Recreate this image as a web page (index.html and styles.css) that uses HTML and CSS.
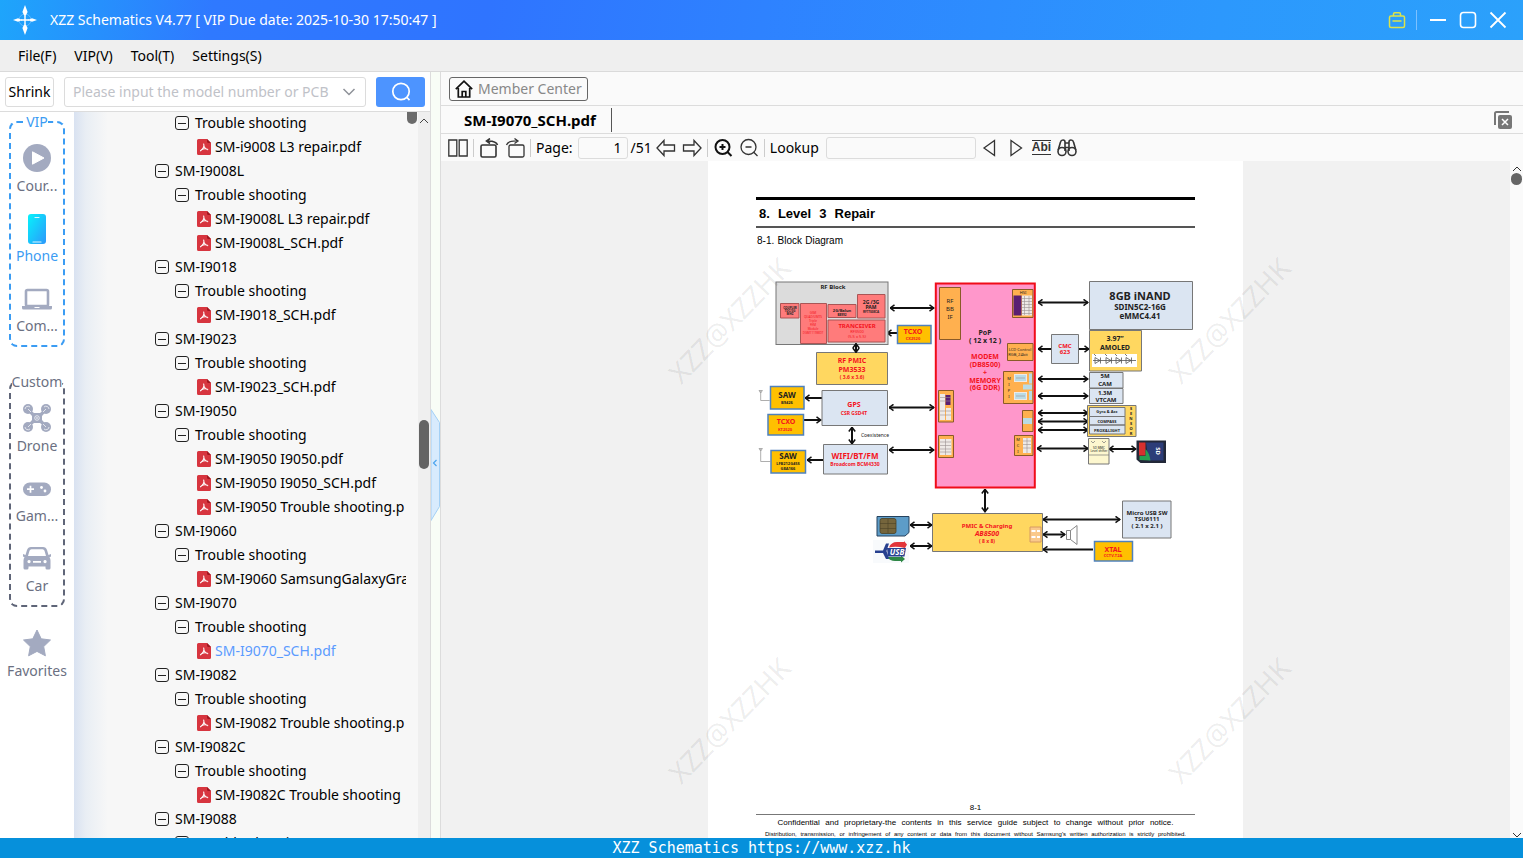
FILE: index.html
```html
<!DOCTYPE html>
<html lang="en">
<head>
<meta charset="utf-8">
<title>XZZ Schematics</title>
<link rel="stylesheet" href="styles.css">
</head>
<body>
<svg class="sprite" aria-hidden="true">
  <symbol id="pdf" viewBox="0 0 14 16">
    <path fill="#d7353f" d="M1.500 0H10l4 4v10.500a1.500 1.500 0 0 1-1.500 1.500h-11A1.500 1.500 0 0 1 0 14.500v-13A1.500 1.500 0 0 1 1.500 0z"/>
    <path fill="#a11720" d="M10 0l4 4h-2.500A1.500 1.500 0 0 1 10 2.500z"/>
    <path fill="none" stroke="#fff" stroke-width="1.100" stroke-linecap="round" d="M6.700 5c1 2.500-1 5.500-3.200 6.800M7 7.500c.8 2 2.200 3 3.800 3.200M4.500 10.800c1.500-1 3.500-1.400 5.500-.8"/>
  </symbol>
</svg>
<div class="app">
  <header class="titlebar">
    <svg class="logo" viewBox="0 0 24 30" aria-hidden="true">
      <circle cx="12" cy="15" r="6" fill="none" stroke="#a9d8ff" stroke-width="1" opacity=".45"/>
      <path fill="#fff" d="M12 0l2.600 7L12 12 9.400 7zM12 30l2.600-7-2.600-5L9.400 23zM0 15l5-1.800 4.500 1.800L5 16.800zM24 15l-5-1.800-4.500 1.800 4.500 1.800z"/>
      <path stroke="#fff" stroke-width="1.400" d="M12 11v8M8 15h8"/>
    </svg>
    <span class="title">XZZ Schematics V4.77 [ VIP Due date: 2025-10-30 17:50:47 ]</span>
    <button class="win" aria-label="Toolbox"><svg width="18" height="18" viewBox="0 0 18 18" fill="none" stroke="#dce34a" stroke-width="1.500"><rect x="1.500" y="5" width="15" height="11.500" rx="1.500"/><path d="M5.500 5V3a1.200 1.200 0 0 1 1.200-1.200h4.600A1.200 1.200 0 0 1 12.500 3v2M4.500 10h9"/></svg></button>
    <span class="win-sep"></span>
    <button class="win" aria-label="Minimize"><svg width="18" height="18" viewBox="0 0 18 18"><path stroke="#fff" stroke-width="2" d="M1 9h16"/></svg></button>
    <button class="win" aria-label="Maximize"><svg width="18" height="18" viewBox="0 0 18 18"><rect x="1.500" y="1.500" width="15" height="15" rx="3" fill="none" stroke="#fff" stroke-width="1.600"/></svg></button>
    <button class="win" aria-label="Close"><svg width="18" height="18" viewBox="0 0 18 18"><path stroke="#fff" stroke-width="1.800" d="M1.500 1.500l15 15M16.500 1.500l-15 15"/></svg></button>
  </header>
  <nav class="menubar">
    <button>File(F)</button><button>VIP(V)</button><button>Tool(T)</button><button>Settings(S)</button>
  </nav>
  <main class="main">
    <section class="left">
      <form class="search">
        <button type="button" class="shrink">Shrink</button>
        <div class="combo">
          <input type="text" aria-label="Model search" placeholder="Please input the model number or PCB">
          <button type="button" aria-label="History"><svg width="14" height="8" viewBox="0 0 14 8"><path d="M1.500 1l5.500 5.500L12.500 1" fill="none" stroke="#8f9299" stroke-width="1.500"/></svg></button>
        </div>
        <button type="button" class="go" aria-label="Search"><svg width="20" height="20" viewBox="0 0 20 20" fill="none" stroke="#fff" stroke-width="1.700"><circle cx="10" cy="9.500" r="8.200"/><path d="M15.500 15l3 3.200"/></svg></button>
      </form>
      <div class="browse">
        <aside class="rail">
          <fieldset class="group vip">
            <legend>VIP</legend>
            <button class="cat"><svg viewBox="0 0 30 28"><circle cx="15" cy="14" r="14" fill="#a3aac0"/><path d="M10.500 7.800v12.400L22 14z" fill="#fff" stroke="#fff" stroke-linejoin="round"/></svg><span>Cour...</span></button>
            <button class="cat on"><svg viewBox="0 0 30 28"><defs><linearGradient id="ph" x1="0" x2="1" y1="0" y2="1"><stop offset="0" stop-color="#06f3fb"/><stop offset="1" stop-color="#2d97fb"/></linearGradient></defs><rect x="6" y="0" width="18" height="30" rx="3" fill="url(#ph)"/><path d="M13 3.500h4M11 28h8" stroke="#d9f6ff" stroke-width="1.200" stroke-linecap="round"/></svg><span>Phone</span></button>
            <button class="cat"><svg viewBox="0 0 30 28"><rect x="4" y="6" width="22" height="16" rx="1.500" fill="none" stroke="#a3aac0" stroke-width="2.600"/><path d="M0 22h30v2q0 1.500-1.500 1.500h-27Q0 25.500 0 24z" fill="#a3aac0"/><path d="M12.500 23.500h5" stroke="#fff"/></svg><span>Com...</span></button>
          </fieldset>
          <fieldset class="group custom">
            <legend>Custom</legend>
            <button class="cat"><svg viewBox="0 0 30 28"><g fill="#a3aac0"><circle cx="6" cy="5" r="5"/><circle cx="24" cy="5" r="5"/><circle cx="6" cy="23" r="5"/><circle cx="24" cy="23" r="5"/><path d="M6 4l6 5h6l6-5 1.500 2-5.500 6v4l5.500 6-1.500 2-6-5h-6l-6 5-1.500-2 5.500-6v-4L4.500 6z"/></g><g fill="none" stroke="#fff" stroke-width=".7"><circle cx="15" cy="14" r="2.300"/><path d="M3 5a3 3 0 0 1 5-2M22 3a3 3 0 0 1 5 2M3 23a3 3 0 0 0 5 2M22 25a3 3 0 0 0 5-2M6 5l3 3M24 5l-3 3M6 23l3-3M24 23l-3-3"/></g><circle cx="15" cy="14" r=".8" fill="#fff"/></svg><span>Drone</span></button>
            <button class="cat"><svg viewBox="0 0 30 28"><rect x="1" y="8.500" width="28" height="13.500" rx="6.700" fill="#a3aac0"/><path d="M5 15.200h7M8.500 11.700v7" stroke="#fff" stroke-width="1.700"/><circle cx="19.500" cy="13.500" r="1.400" fill="#fff"/><circle cx="23" cy="17" r="1.400" fill="#fff"/></svg><span>Gam...</span></button>
            <button class="cat"><svg viewBox="0 0 30 28"><path fill="#a3aac0" fill-rule="evenodd" d="M9 3h12q3 0 4 3l1.500 5 2.500-1v2.500l-1.500.8q1 1.200 1 3.200V24q0 1.500-1.500 1.500h-2Q23.500 25.500 23.500 24v-1.500h-17V24Q6.500 25.500 5 25.500H3Q1.500 25.500 1.500 24v-7.500q0-2 1-3.200L1 12.500V10l2.500 1L5 6q1-3 4-3zm.5 2.200Q8 5.200 7.500 6.800L6 12h18l-1.500-5.200Q22 5.200 20.500 5.200zM7 16a1.600 1.600 0 1 0 .1 0zm16 0a1.600 1.600 0 1 0 .1 0zM11 17v1.800h8V17z"/></svg><span>Car</span></button>
          </fieldset>
          <button class="cat fav"><svg viewBox="0 0 30 28"><path d="M15 1l4.200 8.800 9.300 1.200-6.800 6.600 1.700 9.200L15 22.400l-8.400 4.400 1.700-9.200L1.500 11l9.300-1.200z" fill="#a3aac0" stroke="#a3aac0" stroke-linejoin="round"/></svg><span>Favorites</span></button>
        </aside>
        <div class="tree-pane">
          <ul class="tree">
            <li><ul><li><div class="row"><button class="tog" aria-label="Collapse"></button>Trouble shooting</div>
              <a class="row file" href="#"><svg><use href="#pdf"/></svg>SM-i9008 L3 repair.pdf</a></li></ul></li>
            <li><div class="row"><button class="tog" aria-label="Collapse"></button>SM-I9008L</div>
              <ul><li><div class="row"><button class="tog" aria-label="Collapse"></button>Trouble shooting</div>
              <a class="row file" href="#"><svg><use href="#pdf"/></svg>SM-I9008L L3 repair.pdf</a>
              <a class="row file" href="#"><svg><use href="#pdf"/></svg>SM-I9008L_SCH.pdf</a></li></ul></li>
            <li><div class="row"><button class="tog" aria-label="Collapse"></button>SM-I9018</div>
              <ul><li><div class="row"><button class="tog" aria-label="Collapse"></button>Trouble shooting</div>
              <a class="row file" href="#"><svg><use href="#pdf"/></svg>SM-I9018_SCH.pdf</a></li></ul></li>
            <li><div class="row"><button class="tog" aria-label="Collapse"></button>SM-I9023</div>
              <ul><li><div class="row"><button class="tog" aria-label="Collapse"></button>Trouble shooting</div>
              <a class="row file" href="#"><svg><use href="#pdf"/></svg>SM-I9023_SCH.pdf</a></li></ul></li>
            <li><div class="row"><button class="tog" aria-label="Collapse"></button>SM-I9050</div>
              <ul><li><div class="row"><button class="tog" aria-label="Collapse"></button>Trouble shooting</div>
              <a class="row file" href="#"><svg><use href="#pdf"/></svg>SM-I9050 I9050.pdf</a>
              <a class="row file" href="#"><svg><use href="#pdf"/></svg>SM-I9050 I9050_SCH.pdf</a>
              <a class="row file" href="#"><svg><use href="#pdf"/></svg>SM-I9050 Trouble shooting.p</a></li></ul></li>
            <li><div class="row"><button class="tog" aria-label="Collapse"></button>SM-I9060</div>
              <ul><li><div class="row"><button class="tog" aria-label="Collapse"></button>Trouble shooting</div>
              <a class="row file" href="#"><svg><use href="#pdf"/></svg>SM-I9060 SamsungGalaxyGra</a></li></ul></li>
            <li><div class="row"><button class="tog" aria-label="Collapse"></button>SM-I9070</div>
              <ul><li><div class="row"><button class="tog" aria-label="Collapse"></button>Trouble shooting</div>
              <a class="row file current" href="#"><svg><use href="#pdf"/></svg>SM-I9070_SCH.pdf</a></li></ul></li>
            <li><div class="row"><button class="tog" aria-label="Collapse"></button>SM-I9082</div>
              <ul><li><div class="row"><button class="tog" aria-label="Collapse"></button>Trouble shooting</div>
              <a class="row file" href="#"><svg><use href="#pdf"/></svg>SM-I9082 Trouble shooting.p</a></li></ul></li>
            <li><div class="row"><button class="tog" aria-label="Collapse"></button>SM-I9082C</div>
              <ul><li><div class="row"><button class="tog" aria-label="Collapse"></button>Trouble shooting</div>
              <a class="row file" href="#"><svg><use href="#pdf"/></svg>SM-I9082C Trouble shooting</a></li></ul></li>
            <li><div class="row"><button class="tog" aria-label="Collapse"></button>SM-I9088</div>
              <ul><li><div class="row"><button class="tog" aria-label="Collapse"></button>Trouble shooting</div></li></ul></li>
          </ul>
          <div class="old-thumb"></div>
          <div class="vscroll"><svg width="10" height="6" viewBox="0 0 10 6"><path d="M1 5l4-4 4 4" fill="none" stroke="#444"/></svg><div class="thumb"></div></div>
        </div>
      </div>
    </section>
    <div class="splitter"><button aria-label="Hide panel"><svg width="9" height="112" viewBox="0 0 9 112"><path d="M0 .5l8.500 13v84L0 111.500z" fill="#d8ebfd" stroke="#a3d0f5"/><path d="M5.500 51L2.500 54l3 3" fill="none" stroke="#4ba4ee" stroke-width="1.200"/></svg></button></div>
    <section class="right">
      <div class="memberbar">
        <button class="member"><svg width="18" height="18" viewBox="0 0 18 18" fill="none" stroke="#111" stroke-width="1.700"><path d="M.8 9.200L9 1.200l8.200 8M3.300 8v9h11.400V8M7.200 17v-5.500h3.600V17"/></svg>Member Center</button>
      </div>
      <div class="tabs">
        <button class="tab">SM-I9070_SCH.pdf</button>
        <button class="closeall" aria-label="Close all"><svg width="18" height="18" viewBox="0 0 18 18"><path d="M1 14V2.500Q1 1 2.500 1H15" fill="none" stroke="#777" stroke-width="2"/><rect x="4" y="4" width="14" height="14" rx="2" fill="#777"/><path d="M8 8l6 6M14 8l-6 6" stroke="#fff" stroke-width="1.500"/></svg></button>
      </div>
      <div class="toolbar">
        <button aria-label="Two pages"><svg class="g" viewBox="0 0 20 20"><path d="M.8 2h8v16h-8zM11.200 2h8v16h-8z"/></svg></button>
        <i></i>
        <button aria-label="Rotate left"><svg class="g b" viewBox="0 0 20 20"><rect x="2" y="7" width="15" height="12" rx="1.500"/><path d="M18.500 7Q17 2.500 8 3M11 .500L7.500 3l3.500 2.500"/></svg></button>
        <button class="r2" aria-label="Rotate right"><svg class="g" viewBox="0 0 20 20"><rect x="4" y="7" width="15" height="12" rx="1.500"/><path d="M1.500 7Q3 2.500 13 3M9.500.500L13 3 9.500 5.500"/></svg></button>
        <i></i>
        <label for="pg">Page:</label>
        <input id="pg" class="pg" type="text" value="1">
        <span class="total">/51</span>
        <button aria-label="Previous page"><svg class="g" viewBox="0 0 20 20"><path d="M1 10l7-7.500V7h10.500v6H8v4.500z"/></svg></button>
        <button class="nx" aria-label="Next page"><svg class="g" viewBox="0 0 20 20"><path d="M19 10l-7-7.500V7H1.500v6H12v4.500z"/></svg></button>
        <i></i>
        <button aria-label="Zoom in"><svg class="g bb" viewBox="0 0 20 20"><circle cx="9.500" cy="9" r="7"/><path d="M14.500 14l4 4M6.500 9h6M9.500 6v6"/></svg></button>
        <button class="nx" aria-label="Zoom out"><svg class="g" viewBox="0 0 20 20"><circle cx="9.500" cy="9" r="7.500"/><path d="M14.500 14l4 4M6.500 9h6"/></svg></button>
        <i></i>
        <label for="lk">Lookup</label>
        <input id="lk" class="lk" type="text">
        <button aria-label="Find previous"><svg class="g" viewBox="0 0 20 20"><path d="M14.500 2.500v15L4 10z"/></svg></button>
        <button class="nx" aria-label="Find next"><svg class="g" viewBox="0 0 20 20"><path d="M5 2.500v15L15.500 10z"/></svg></button>
        <button class="abi nx">Abi</button>
        <button class="nx" aria-label="Search in document"><svg class="g b" viewBox="0 0 20 20"><circle cx="5" cy="13.500" r="4"/><circle cx="15" cy="13.500" r="4"/><path d="M1.200 12L3.500 4Q4 2 6 2t2 2v9M18.800 12L16.500 4Q16 2 14 2t-2 2v9M8 5h4M8 9.500h4"/></svg></button>
      </div>
      <div class="viewer">
        <div class="canvas">
          <article class="page">
            <h1><span>8. Level 3 Repair</span></h1>
            <h2>8-1. Block Diagram</h2>
            <svg class="diagram" viewBox="756 278 439 290" role="img" aria-label="Block diagram">
              <defs>
                <marker id="ar" viewBox="0 0 6 8" refX="5.500" refY="4" markerWidth="6" markerHeight="8" markerUnits="userSpaceOnUse" orient="auto-start-reverse"><path d="M1 .8L5.300 4 1 7.200" fill="none" stroke="#111" stroke-width="1.500"/></marker>
              </defs>
              <g class="edge">
                <path class="two" d="M890 308h44"/><path class="end" d="M897 333h-10"/>
                <path class="two" d="M889 407.500h45"/><path class="two" d="M889 450h45"/>
                <path class="end" d="M822 398h-17"/><path class="end" d="M804 420h17"/><path class="end" d="M823 460h-16"/>
                <path class="two" d="M852 427v17"/><path class="two" d="M985 489v23"/>
                <path class="two" d="M910 525h22"/><path class="two" d="M910 546h22"/>
                <path class="two" d="M1038 302.500h50"/><path class="two" d="M1038 349h51"/>
                <path class="two" d="M1038 379h50"/><path class="two" d="M1038 396h50"/>
                <path class="two" d="M1038 413h50"/><path class="two" d="M1038 421.500h50"/><path class="two" d="M1038 430h50"/>
                <path class="two" d="M1037 448.500h51"/><path class="two" d="M1109 449h27"/>
                <path class="two" d="M1043 519.500h77"/><path class="two" d="M1043 534.500h22"/><path class="end" d="M1093 549.500h-50"/>
              </g>
              <g stroke="#777" stroke-width="1">
                <rect x="776" y="282" width="112" height="62.500" fill="#dcdcdc"/>
                <g fill="#ff7b7b" stroke="#a55"><path d="M780.500 303.500h18.500v14.500h-18.500zM800.500 303.500h26v40h-26zM828 304.500h28v13h-28zM857.500 294.500h27.500v23.500h-27.500zM828 320h57v22h-57z"/></g>
                <path fill="#ffd760" d="M816.500 352.500h71v32h-71z"/>
                <path fill="#dbe5f2" d="M822 390.500h65.500v35H822zM823.500 444.500h64v29.500h-64z"/>
                <path fill="#ffc000" stroke="#4f81bd" stroke-width="1.500" d="M897.500 325.500h33.500v18h-33.500zM770.500 386.500h33.500v22.500h-33.500zM768 414.500h35.500v20.500H768zM771 450.500h34.500v22.500H771zM1094.500 541.500h38v19.500h-38z"/>
                <rect x="935.800" y="283.500" width="99" height="204" fill="#ff97cb" stroke="#f00c19" stroke-width="2"/>
                <path fill="#ffb04f" stroke="#8a5a28" d="M939.500 287.500h21v52h-21zM1012.500 289.500h20.500v28h-20.500zM1007.500 343.500h25.500v17h-25.500zM1003.500 371.500h29.500v32h-29.500zM1022.500 410.500h10.500v21h-10.500zM1014.500 435.500h18.500v20h-18.500zM938.500 390.500h15v31.500h-15zM938.500 435.500h15v22h-15z"/>
                <path fill="#ffd760" d="M932.500 513.500h110v38h-110zM1089.500 330.500h52v40.500h-52zM1087.500 405.500h48.500v31h-48.500z"/>
                <path fill="#dbe5f2" d="M1089.500 281.500h103v48h-103zM1051.500 334.500h27v29h-27zM1089.500 372.500h33.500v15.500h-33.500zM1089.500 388.500h33.500v15h-33.500zM1089.500 407.500h35.500v9h-35.500zM1089.500 416.500h35.500v8.500h-35.500zM1089.500 425h35.500v9h-35.500zM1122.500 501h48.500v37h-48.500z"/>
                <path fill="#fdf7cf" d="M1088.500 438.500h20.500v25.500h-20.500z"/>
              </g>
              <path class="two" stroke="#111" stroke-width="2" d="M856 343.500v9"/>
              <path fill="#5b1f73" d="M1013.500 295.500h8v20h-8zM945.500 395h5v10h-5z"/>
              <path fill="#eee9e6" d="M1022 295.500h10v20h-10zM940 394h5v26h-5zM946 408h5v12h-5zM940 439h11.500v16H940zM1023 438h8v15h-8zM1014 374h13v8h-13zM1014 392h13v8h-13z"/>
              <path fill="#b9dbe6" d="M1029 373.500h3v10h-3zM1029 391h3v9h-3zM1023 384.500h9v5h-9zM1023 418h9v6h-9zM1015 375h11v6h-11zM1015 393h11v6h-11z"/>
              <path stroke="#9a9090" stroke-width=".6" d="M1022 298.500h10M1022 301.500h10M1022 304.500h10M1022 307.500h10M1022 310.500h10M1022 313.500h10M1024.500 296v19M1029 296v19M940 397.500h11M940 401h11M940 411h11M940 415h11M940 442h11M940 445.500h11M940 449h11M940 452h11M1023 441h8M1023 444.500h8M1023 448h8M1027 438v15M945.500 439v16M1016 378h9M1016 396h9"/>
              <path fill="#fff" d="M1092 354h45v13h-45z"/>
              <path fill="none" stroke="#555" stroke-width=".8" d="M1093 360.500h43M1095 357.500v6l5-3zM1106 357.500v6l5-3zM1116 357.500v6l5-3zM1126 357.500v6l5-3zM1100.500 357.500v6M1111.500 357.500v6M1121.500 357.500v6M1131.500 357.500v6M1096 356l-2-2M1107 356l-2-2M1117 356l-2-2M1127 356l-2-2"/>
              <path fill="none" stroke="#999" stroke-width=".8" d="M759 390.500l1.700 2.500 1.700-2.500zM760.700 391v9.500h9M759 448.500l1.700 2.500 1.700-2.500zM760.700 449v12.500h10"/>
              <path fill="#5d9cc8" stroke="#26435e" d="M877 516.500h32v16l-4 3.500h-28z"/><rect x="880" y="518.500" width="16" height="15" rx="2" fill="#75653c" stroke="#4b4226" stroke-width=".8"/><path d="M880 523.500h16M880 528.500h16M888 519v14" stroke="#4b4226" stroke-width=".6"/>
              <rect x="873" y="540" width="36" height="23" fill="#f8fafc"/>
              <path fill="#e2353a" d="M889 547.500q2-5.500 8-5.500h7v-1l3 3.500-2 3.500q-9-2-16-.5z"/><path fill="#2e8745" d="M887 557q3 4 8 4h6v1.500l4-3.500-4-3.500v1.500z"/><path fill="#27408f" d="M875 550.500h8l3-7h3l-2.500 7.500 2.500 8h-3l-3-6h-8zM887 548h19l-1.500 8.500H888z"/>
              <path fill="#222838" d="M1136.500 440.500h29.500v22.500h-25.500l-4-3.500z"/><path fill="#d8302e" d="M1139 442.500h6.500v13h-6.500z"/><path fill="#2c3d78" d="M1146 442.500h17.500v18h-15z"/><path fill="#28a052" d="M1145.500 449q4 4 5 11.500l-11-.5v-4h6z"/>
              <path fill="#fac98b" stroke="#d69a62" d="M1030 527h11v15h-11z"/><path fill="#fff" d="M1031.500 530h4v2h-4zM1037 530h3v2h-3zM1031.500 536h4v2h-4zM1037 536h3v2h-3z"/>
              <path fill="#fff" stroke="#888" d="M1066.500 530.500h4v9h-4zM1070.500 530.500l6.500-5v19l-6.500-5z"/>
              <path fill="none" stroke="#777" stroke-width=".7" d="M1091 441l2 2 2-2M1102 441l2 2 2-2M1088.500 455h20.500"/>
              <g class="t">
                <text x="833" y="289" font-size="6">RF Block</text>
                <g font-size="3"><text x="790" y="309">COUPLER</text><text x="790" y="312">TDC/3G</text><text x="790" y="315">MHZ</text></g>
                <g font-size="4"><text x="842" y="312">2G/Balun</text><text x="842" y="316" font-size="3">B8992</text></g>
                <g font-size="5"><text x="871" y="304">2G /3G</text><text x="871" y="309">PAM</text><text x="871" y="313" font-size="3">RF7700SCA</text></g>
                <g font-size="8"><text x="787" y="398">SAW</text><text x="788" y="459">SAW</text></g>
                <g font-size="4"><text x="787" y="404">B9426</text><text x="788" y="465">LFB212G45S</text><text x="788" y="470">G8A166</text></g>
                <text x="875" y="437" font-size="5" font-weight="400">Coexistence</text>
                <g font-size="6" font-weight="400"><text x="950" y="303">RF</text><text x="950" y="311">BB</text><text x="950" y="319">IF</text></g>
                <g font-size="7"><text x="985" y="335">PoP</text><text x="985" y="343">( 12 x 12 )</text></g>
                <g font-size="4" font-weight="400"><text x="1023" y="294">HSI</text><text x="1020" y="351">LCD Control</text><text x="1018" y="356">RGB_24bit</text><text x="1009" y="380">M</text><text x="1009" y="386">I</text><text x="1009" y="392">P</text><text x="1009" y="398">I</text><text x="1018" y="441">M</text><text x="1018" y="447">C</text><text x="1018" y="453">I</text></g>
                <text x="1140" y="300" font-size="11">8GB iNAND</text><g font-size="8"><text x="1140" y="310">SDIN5C2-16G</text><text x="1140" y="319">eMMC4.41</text><text x="1115" y="341" font-size="7">3.97”</text><text x="1115" y="350" font-size="7">AMOLED</text></g>
                <g font-size="6"><text x="1105" y="378">5M</text><text x="1105" y="386">CAM</text><text x="1105" y="395">1.3M</text><text x="1106" y="402">VTCAM</text></g>
                <g font-size="4"><text x="1107" y="413">Gyro &amp; Acc</text><text x="1107" y="423">COMPASS</text><text x="1107" y="432">PROX&amp;LIGHT</text><text x="1131" y="410">S</text><text x="1131" y="415">E</text><text x="1131" y="420">N</text><text x="1131" y="425">S</text><text x="1131" y="430">O</text><text x="1131" y="435">R</text></g>
                <g font-size="3" font-weight="400"><text x="1099" y="449">SD MMC</text><text x="1099" y="452">Level shifter</text></g>
                <text x="1156" y="451" font-size="6" fill="#fff" transform="rotate(90 1156 451)">SD</text>
                <g font-size="6"><text x="1147" y="515">Micro USB SW</text><text x="1147" y="521">TSU6111</text><text x="1147" y="528">( 2.1 x 2.1 )</text></g>
                <text x="897" y="555" font-size="8" fill="#fff" font-style="italic">USB</text>
              </g>
              <g class="t red">
                <g font-size="3" font-weight="400"><text x="813" y="314">GSM</text><text x="813" y="318">QUAD/UMTS</text><text x="813" y="322">Triple</text><text x="813" y="326">FEM</text><text x="813" y="330">Module</text><text x="813" y="334">DGM1119MD7</text></g>
                <text x="857" y="328" font-size="6">TRANCEIVER</text><g font-size="4" font-weight="400"><text x="857" y="333">RF3500</text><text x="857" y="338">(5.5 x 5.5)</text></g>
                <g font-size="7"><text x="913" y="334">TCXO</text><text x="852" y="363">RF PMIC</text><text x="852" y="372">PM3533</text><text x="786" y="424">TCXO</text></g>
                <g font-size="5"><text x="913" y="340" font-size="4">CX2520</text><text x="852" y="379">( 3.6 x 3.6)</text><text x="785" y="431" font-size="4">KT2520</text></g>
                <text x="854" y="407" font-size="7">GPS</text><text x="854" y="415" font-size="5">CSR GSD4T</text>
                <text x="855" y="459" font-size="8">WIFI/BT/FM</text><text x="855" y="466" font-size="5">Broadcom BCM4330</text>
                <g font-size="7"><text x="985" y="359">MODEM</text><text x="985" y="367">(DB8500)</text><text x="985" y="375">+</text><text x="985" y="383">MEMORY</text><text x="985" y="390">(6G DDR)</text><text x="987" y="528" font-size="6">PMIC &amp; Charging</text><text x="987" y="536" font-style="italic">AB8500</text></g>
                <text x="987" y="543" font-size="5">( 8 x 8)</text>
                <g font-size="6"><text x="1065" y="348">CMC</text><text x="1065" y="354">623</text></g>
                <text x="1113" y="552" font-size="7">XTAL</text><text x="1113" y="557" font-size="4">CCTV-T2A</text>
              </g>
            </svg>
            <footer class="pagefoot"><p class="num">8-1</p><p class="conf">Confidential and proprietary-the contents in this service guide subject to change without prior notice.</p><p class="dist">Distribution, transmission, or infringement of any content or data from this document without Samsung's written authorization is strictly prohibited.</p></footer>
            <span class="wm tl">XZZ@XZZHK</span><span class="wm tr">XZZ@XZZHK</span><span class="wm bl">XZZ@XZZHK</span><span class="wm br">XZZ@XZZHK</span>
          </article>
        </div>
        <div class="vbar"><svg width="10" height="6" viewBox="0 0 10 6"><path d="M1 5l4-4 4 4" fill="none" stroke="#333"/></svg><div class="dot"></div><svg class="dn" width="10" height="6" viewBox="0 0 10 6"><path d="M1 1l4 4 4-4" fill="none" stroke="#333"/></svg></div>
      </div>
    </section>
  </main>
  <footer class="status">XZZ Schematics https://www.xzz.hk</footer>
</div>
</body>
</html>
```
FILE: styles.css
```css
* { box-sizing: border-box; }
body { margin: 0; font: 14px/20px "Noto Sans", "Open Sans", sans-serif; color: #000; }
button { padding: 0; border: 0; background: none; font: inherit; color: inherit; }
input { font: inherit; min-width: 0; }
svg { display: block; flex: none; }
ul { list-style: none; margin: 0; padding: 0; }
.sprite { position: absolute; width: 0; height: 0; }
.app { height: 100vh; display: flex; flex-direction: column; overflow: hidden; }

.titlebar { flex: none; height: 40px; display: flex; align-items: center; padding: 0 16px 0 13px; color: #fff; background: linear-gradient(100deg, #1ea5fb 0, #2f79ff 14%, #2f74ff 32%, #2e82ff 50%, #2c98fd 80%, #2ba1fb 100%); }
.logo { width: 24px; height: 30px; }
.title { margin: 0 auto 0 13px; }
.win { margin-left: 12px; }
.win-sep { width: 1px; height: 20px; margin-left: 10px; background: #7cc1ff; }

.menubar { flex: none; height: 32px; display: flex; align-items: center; gap: 18px; padding: 1px 18px 0; background: #efefef; border-bottom: 1px solid #dadada; }

.main { flex: 1; min-height: 0; display: flex; }
.left { flex: none; width: 431px; display: flex; flex-direction: column; border-right: 1px solid #dcdcdc; }
.search { flex: none; height: 40px; display: flex; align-items: center; padding: 0 5px; border-bottom: 1px solid #dcdcdc; }
.shrink { width: 49px; height: 30px; border: 1px solid #dcdcdc; border-radius: 3px; }
.combo { flex: 1; height: 30px; margin: 0 10px; display: flex; align-items: center; padding: 0 9px 0 8px; border: 1px solid #dcdcdc; border-radius: 3px; }
.combo input { flex: 1; border: 0; padding: 0; outline: 0; background: none; }
.combo input::placeholder { color: #bfc2c8; opacity: 1; }
.go { width: 49px; height: 30px; border-radius: 3px; background: #4d94ff; display: grid; place-items: center; }
.browse { flex: 1; min-height: 0; display: flex; }
.rail { flex: none; width: 74px; display: flex; flex-direction: column; align-items: center; gap: 25px; color: #6b7082; }
.group { width: 56px; min-width: 0; margin: 0; padding: 12px 0 8px; border: 2px dashed; border-radius: 8px; display: flex; flex-direction: column; gap: 17px; }
.group legend { margin: 0 auto; padding: 0; line-height: 20px; }
.vip { border-color: #3b9cf3; }
.vip legend, .cat.on { color: #3b9cf3; }
.custom { border-color: #5f6578; }
.custom legend { color: #6b7082; }
.cat { display: flex; flex-direction: column; align-items: center; gap: 3px; line-height: 22px; }
.cat svg { width: 30px; height: 28px; overflow: visible; }
.fav { margin-top: -3px; }

.tree-pane { flex: 1; min-width: 0; display: flex; overflow: hidden; background: linear-gradient(90deg, #d9e2f1 0, #e9eef4 12px, #f7f7f7 34px); }
.tree { flex: 1; min-width: 0; margin-top: -1px; padding-left: 81px; overflow: hidden; }
.tree ul { padding-left: 20px; }
.row { height: 24px; display: flex; align-items: center; gap: 6px; white-space: nowrap; }
.tog { flex: none; width: 14px; height: 14px; border: 1px solid #222; border-radius: 3px; display: grid; place-items: center; }
.tog::before { content: ""; width: 8px; height: 1px; background: #222; }
.file { margin-left: 22px; gap: 4px; color: #000; text-decoration: none; }
.file svg { width: 14px; height: 16px; }
.current { color: #5b9bff; }
.old-thumb { flex: none; width: 10px; height: 12px; margin: 0 1px; background: #6b6b6b; border-radius: 0 0 5px 5px; }
.vscroll { flex: none; width: 12px; display: flex; flex-direction: column; align-items: center; padding-top: 6px; background: #efefef; }
.thumb { width: 10px; height: 49px; margin-top: 296px; border-radius: 5px; background: #646464; }

.splitter { flex: none; width: 10px; display: flex; align-items: flex-start; padding-top: 337px; background: #f8fdf6; border-right: 1px solid #dcdcdc; }

.right { flex: 1; min-width: 0; display: flex; flex-direction: column; background: #fafafa; }
.memberbar { flex: none; height: 34px; display: flex; align-items: center; padding: 0 8px; border-bottom: 1px solid #dcdcdc; }
.member { height: 24px; display: flex; align-items: center; gap: 5px; padding: 0 5px; border: 1px solid #666; border-radius: 3px; color: #888; }
.tabs { flex: none; height: 28px; display: flex; align-items: center; justify-content: space-between; padding: 0 11px 0 8px; border-bottom: 1px solid #dcdcdc; }
.tab { height: 24px; padding: 0 15px; font-size: 15px; font-weight: 700; border-right: 1px solid #555; }
.toolbar { flex: none; height: 27px; display: flex; align-items: center; padding: 0 7px; }
.toolbar i { width: 1px; height: 18px; margin: 0 5px; background: #ccc; }
.g { width: 20px; height: 20px; fill: none; stroke: #333; stroke-width: 1.300; }
.g.b { stroke-width: 1.600; }
.g.bb { stroke-width: 2; stroke: #111; }
.toolbar .r2, .toolbar .nx { margin-left: 6px; }
.toolbar input { height: 22px; border: 1px solid #dcdcdc; border-radius: 3px; background: #fafafa; }
.pg { width: 50px; margin: 0 3px 0 5px; padding: 0 5px; text-align: right; }
.total { margin-right: 4px; }
.lk { width: 150px; margin: 0 4px 0 7px; }
.abi { height: 15px; border: solid #333; border-width: 1px 0; font: 700 12px/13px "Liberation Sans", sans-serif; color: #333; }

.viewer { flex: 1; min-height: 0; display: flex; background: #f1f1f1; }
.canvas { flex: 1; min-width: 0; overflow: hidden; display: flex; justify-content: center; align-items: flex-start; }
.page { position: relative; flex: none; width: 535px; padding: 36px 48px 40px; background: #fff; font-family: "Liberation Sans", Arial, sans-serif; }
.page h1 { margin: 0; height: 31px; border-top: 3px solid #000; border-bottom: 2px solid #555; font-size: 13px; line-height: 28px; padding-left: 3px; }
.page h1 span { display: block; width: 116px; text-align: justify; text-align-last: justify; white-space: nowrap; }
.page h2 { margin: 4px 0 0; font-size: 10px; line-height: 18px; font-weight: 400; padding-left: 1px; width: 87px; text-align: justify; text-align-last: justify; }
.diagram { width: 100%; margin-top: 28px; }
.edge path { fill: none; stroke: #111; stroke-width: 2; }
.two { marker-start: url(#ar); marker-end: url(#ar); }
.end { marker-end: url(#ar); }
.t { font-family: "Noto Sans", sans-serif; font-weight: 700; text-anchor: middle; fill: #222; }
.t.red { fill: #f4141e; }
.pagefoot { margin-top: 234px; }
.pagefoot p { margin: 0 auto; text-align: center; text-align-last: justify; }
.pagefoot .num { font-size: 8px; line-height: 12px; text-align-last: center; border-bottom: 1px solid #777; }
.pagefoot .conf { width: 396px; font-size: 8px; line-height: 16px; }
.pagefoot .dist { width: 421px; font-size: 6px; line-height: 7px; }
.wm { position: absolute; width: 200px; line-height: 30px; margin: -15px 0 0 -100px; text-align: center; font-family: "Noto Sans", sans-serif; font-size: 28px; color: rgba(0,0,0,.08); transform: rotate(-46deg); }
.tl { left: 21px; top: 159px; }
.tr { left: 521px; top: 159px; }
.bl { left: 21px; top: 559px; }
.br { left: 521px; top: 559px; }
.vbar { flex: none; width: 13px; display: flex; flex-direction: column; align-items: center; padding-top: 5px; background: #fafafa; }
.dot { width: 11px; height: 12px; margin-top: 1px; border-radius: 6px; background: #666; }
.dn { margin-top: auto; }

.status { flex: none; height: 20px; background: #0690db; color: #fff; text-align: center; font: 15px/20px "DejaVu Sans Mono", monospace; }
```
